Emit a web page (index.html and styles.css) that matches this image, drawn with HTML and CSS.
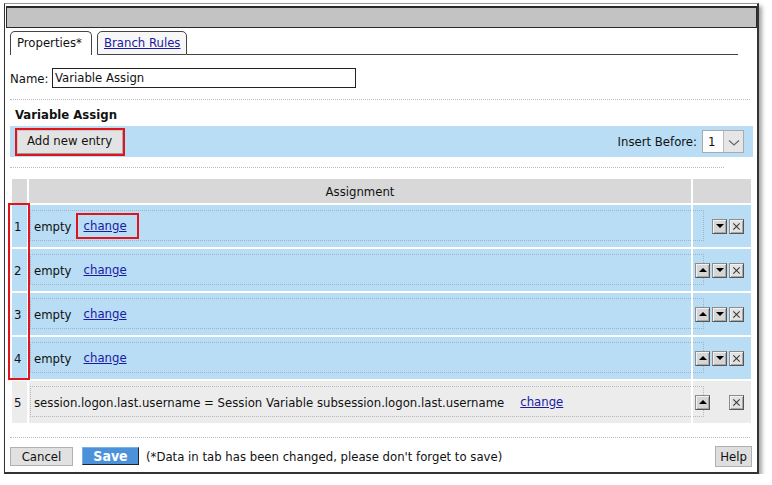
FILE: index.html
```html
<!DOCTYPE html>
<html>
<head>
<meta charset="utf-8">
<title>Variable Assign</title>
<link rel="stylesheet" href="styles.css">
</head>
<body>
<div class="window">
  <div class="titlebar"></div>
  <div class="tabs">
    <div class="tab active">Properties*</div>
    <div class="tab"><a href="#">Branch Rules</a></div>
    <div class="tab-fill"></div>
  </div>
  <div class="content">
    <div class="name-row">
      <label class="name-label">Name:</label>
      <div class="name-input">Variable Assign</div>
    </div>
    <div class="dots"></div>
    <div class="section-title">Variable Assign</div>
    <div class="toolbar">
      <div class="btn-hl"><div class="btn add-btn">Add new entry</div></div>
      <div class="insert">
        <span>Insert Before:</span>
        <span class="select"><span class="sel-val">1</span><span class="sel-arrow"><svg width="12" height="8" viewBox="0 0 12 8"><path d="M1 1.5 L6 6 L11 1.5" fill="none" stroke="#666" stroke-width="1.2"/></svg></span></span>
      </div>
    </div>
    <div class="dots short"></div>
    <div class="grid">
      <div class="hcell r1 c1"></div>
      <div class="hcell r1 c2">Assignment</div>
      <div class="hcell r1 c3"></div>

      <div class="cell idx r2 c1">1</div>
      <div class="cell asg r2 c2"><div class="asg-box"><span>empty</span><a class="chg marked" href="#">change</a></div></div>
      <div class="cell act r2 c3"><span class="slot"></span><span class="ib down"></span><span class="ib del"></span></div>

      <div class="cell idx r3 c1">2</div>
      <div class="cell asg r3 c2"><div class="asg-box"><span>empty</span><a class="chg" href="#">change</a></div></div>
      <div class="cell act r3 c3"><span class="ib up"></span><span class="ib down"></span><span class="ib del"></span></div>

      <div class="cell idx r4 c1">3</div>
      <div class="cell asg r4 c2"><div class="asg-box"><span>empty</span><a class="chg" href="#">change</a></div></div>
      <div class="cell act r4 c3"><span class="ib up"></span><span class="ib down"></span><span class="ib del"></span></div>

      <div class="cell idx r5 c1">4</div>
      <div class="cell asg r5 c2"><div class="asg-box"><span>empty</span><a class="chg" href="#">change</a></div></div>
      <div class="cell act r5 c3"><span class="ib up"></span><span class="ib down"></span><span class="ib del"></span></div>

      <div class="cell idx grey r6 c1">5</div>
      <div class="cell asg grey r6 c2"><div class="asg-box"><span>session.logon.last.username = Session Variable subsession.logon.last.username</span><a class="chg long" href="#">change</a></div></div>
      <div class="cell act grey r6 c3"><span class="ib up"></span><span class="slot"></span><span class="ib del"></span></div>

      <div class="idx-hl"></div>
    </div>
    <div class="dots foot"></div>
    <div class="footer">
      <div class="btn cancel">Cancel</div>
      <div class="btn save">Save</div>
      <span class="note">(*Data in tab has been changed, please don't forget to save)</span>
      <div class="btn help">Help</div>
    </div>
  </div>
</div>
</body>
</html>
```
FILE: styles.css
```css
* { box-sizing: border-box; }
body {
  margin: 0;
  background: #fff;
  font-family: "DejaVu Sans Condensed", "DejaVu Sans", sans-serif;
  font-size: 13px;
  color: #111;
}
.window {
  margin: 3px 0 0 4px;
  width: 755px;
  height: 471px;
  border: 1px solid #333;
  border-right-width: 2px;
  border-bottom-width: 2px;
  border-top-color: #999;
  box-shadow: 3px 3px 4px rgba(0,0,0,0.35);
  background: #fff;
}
.titlebar {
  margin: 2px 0 0 1px;
  height: 22px;
  background: #c3c3c3;
  border: 1px solid #2a2a2a;
  border-width: 2px 1px 1px 1px;
}
.tabs {
  display: flex;
  align-items: flex-end;
  margin-top: 3px;
  padding-left: 5px;
  height: 24px;
}
.tab {
  height: 24px;
  border: 1px solid #444;
  border-radius: 5px 5px 0 0;
  padding: 3px 5px 0 6px;
  background: #fff;
  white-space: nowrap;
}
.tab.active {
  width: 82px;
  border-bottom: none;
}
.tab:not(.active) {
  width: 90px;
  margin-left: 5px;
  background: #f7f7f7;
}
.tab a { color: #1a1aa6; }
.tab-fill {
  width: 551px;
  border-bottom: 1px solid #444;
  height: 1px;
}
.content {
  padding: 0 4px 0 5px;
}
.name-row {
  display: flex;
  align-items: center;
  margin-top: 13px;
  height: 20px;
}
.name-label { width: 42px; }
.name-input {
  width: 304px;
  height: 20px;
  border: 1px solid #222;
  padding: 1px 2px;
  line-height: 16px;
}
.dots {
  border-top: 1px dotted #bbb;
  width: 740px;
  margin-top: 11px;
}
.dots.short { width: 714px; margin-top: 10px; }
.section-title {
  font-weight: bold;
  margin: 7px 0 0 5px;
  height: 19px;
  line-height: 16px;
}
.toolbar {
  display: flex;
  align-items: center;
  justify-content: space-between;
  height: 31px;
  width: 743px;
  background: #b9ddf5;
  padding: 0 9px 0 5px;
}
.btn-hl {
  border: 2px solid #e0141c;
  height: 28px;
  width: 110px;
}
.btn {
  background: #e3e3e3;
  border: 1px solid #c9c9c9;
  border-bottom-color: #9a9a9a;
  border-right-color: #aaa;
  white-space: nowrap;
}
.add-btn {
  height: 24px;
  line-height: 20px;
  padding-left: 9px;
}
.insert {
  display: flex;
  align-items: center;
  gap: 5px;
}
.select {
  display: flex;
  width: 42px;
  height: 23px;
  border: 1px solid #aaa;
  background: #fff;
}
.sel-val {
  width: 20px;
  padding-left: 5px;
  line-height: 21px;
}
.sel-arrow {
  flex: 1;
  background: #e6e6e6;
  border-left: 1px solid #bbb;
  display: flex;
  align-items: center;
  justify-content: center;
  padding-top: 3px;
}
.grid {
  display: grid;
  grid-template-columns: 15px 662px 58px;
  grid-template-rows: 24px repeat(5, 42px);
  gap: 2px;
  margin: 11px 0 0 2px;
  width: 739px;
}
.r1 { grid-row: 1; } .r2 { grid-row: 2; } .r3 { grid-row: 3; }
.r4 { grid-row: 4; } .r5 { grid-row: 5; } .r6 { grid-row: 6; }
.c1 { grid-column: 1; } .c2 { grid-column: 2; } .c3 { grid-column: 3; }
.hcell {
  background: #d8d8d8;
  display: flex;
  align-items: center;
  justify-content: center;
}
.idx-hl {
  grid-column: 1;
  grid-row: 2 / 6;
  border: 2px solid #e0141c;
  margin: -2px -3px -1px -4px;
  z-index: 2;
}
.cell {
  background: #b9ddf5;
  display: flex;
  align-items: center;
}
.cell.grey { background: #ececec; }
.idx { padding-left: 2px; padding-top: 1px; }
.asg { padding: 5px 0 6px 1px; align-items: stretch; }
.asg-box {
  flex: 1;
  display: flex;
  align-items: center;
  border-top: 1px dotted #9fb4c4;
  border-bottom: 1px dotted #9fb4c4;
  border-left: 1px dotted #9fb4c4;
  padding-left: 3px;
  padding-top: 1px;
  white-space: nowrap;
}
.grey .asg-box { border-color: #b8b8b8; }
.chg {
  color: #1a1aa6;
  text-decoration: underline;
  display: inline-block;
  padding: 4px 10px 4px 6px;
  margin-left: 6px;
  line-height: 14px;
}
.chg.long { margin-left: 10px; }
.chg.marked { outline: 2px solid #e0141c; }
.act {
  position: relative;
  gap: 2px;
  padding-left: 2px;
}
.act::before {
  content: "";
  position: absolute;
  left: 0;
  top: 5px;
  bottom: 6px;
  width: 10px;
  border-top: 1px dotted #9fb4c4;
  border-right: 1px dotted #9fb4c4;
  border-bottom: 1px dotted #9fb4c4;
}
.act.grey::before { border-color: #b8b8b8; }
.slot { width: 15px; height: 15px; }
.ib {
  position: relative;
  width: 15px;
  height: 15px;
  background: #d6d6d6;
  border: 1px solid;
  border-color: #8c8c8c #555 #555 #8c8c8c;
  box-shadow: inset 1px 1px 0 #f2f2f2, inset -1px -1px 0 #a8a8a8;
  display: flex;
  align-items: center;
  justify-content: center;
}
.ib.up::after, .ib.down::after {
  content: "";
  width: 0;
  height: 0;
  border-left: 4px solid transparent;
  border-right: 4px solid transparent;
}
.ib.up::after { border-bottom: 4px solid #000; }
.ib.down::after { border-top: 4px solid #000; }
.ib.del { background: #e2e2e2; }
.ib.del::before, .ib.del::after {
  content: "";
  position: absolute;
  left: 6px;
  top: 2px;
  width: 1px;
  height: 9px;
  background: #333;
}
.ib.del::before { transform: rotate(45deg); }
.ib.del::after { transform: rotate(-45deg); }
.dots.foot { margin-top: 14px; width: 740px; }
.footer {
  display: flex;
  align-items: center;
  margin-top: 7px;
  height: 22px;
}
.cancel {
  width: 63px;
  height: 19px;
  line-height: 17px;
  text-align: center;
  background: #e1e1e1;
  border-color: #b0b0b0;
}
.save {
  margin-left: 9px;
  width: 57px;
  height: 18px;
  line-height: 16px;
  text-align: center;
  background: #4b92db;
  color: #fff;
  font-weight: bold;
  font-size: 14px;
  border-color: #7ab0e8 #222 #222 #7ab0e8;
}
.note { margin-left: 7px; }
.help {
  margin-left: auto;
  margin-right: 1px;
  width: 37px;
  height: 21px;
  line-height: 19px;
  text-align: center;
  background: #dedede;
  border-color: #b0b0b0;
}
```
